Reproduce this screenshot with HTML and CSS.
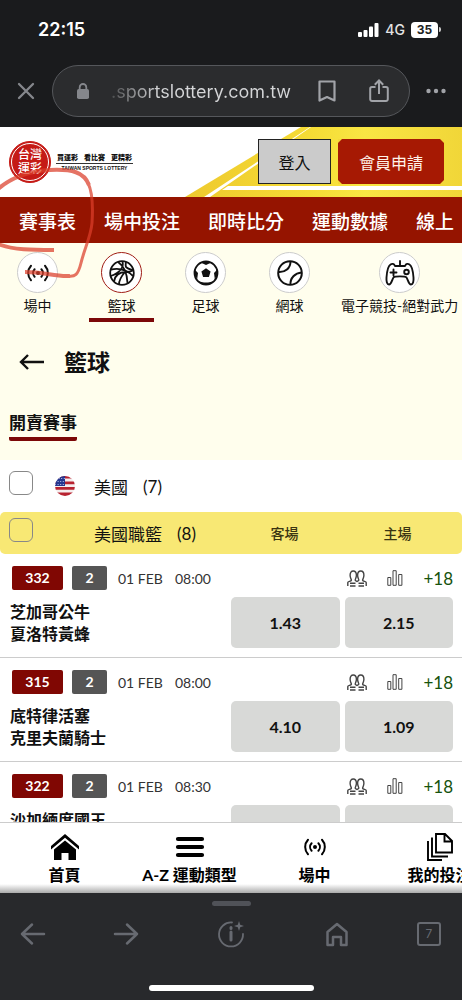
FILE: index.html
```html
<!DOCTYPE html>
<html lang="zh-Hant">
<head>
<meta charset="utf-8">
<meta name="viewport" content="width=device-width, initial-scale=1">
<title>台灣運彩</title>
<link rel="stylesheet" href="styles.css">
</head>
<body>
<svg class="defs" aria-hidden="true">
  <symbol id="live" viewBox="0 0 24 24"><g fill="none" stroke="currentColor" stroke-width="2" stroke-linecap="round"><path d="M8.6 8.2a5.6 5.6 0 0 0 0 7.6M15.4 8.2a5.6 5.6 0 0 1 0 7.6M5 4.8a10.6 10.6 0 0 0 0 14.4M19 4.8a10.6 10.6 0 0 1 0 14.4"/></g><circle cx="12" cy="12" r="2" fill="currentColor"/></symbol>
  <symbol id="people" viewBox="0 0 20 17"><g fill="none" stroke="currentColor" stroke-width="1.400"><path d="M.8 16v-3.400c0-1.400 3.200-1 3.600-2.300.2-.8-1.300-2-1.300-5C3.100 2.600 4.300 1 6.200 1s3.200 1.600 3.200 4.300c0 3-1.600 4.200-1.200 5 .3.700 1 .9 1.800 1.200.8-.3 1.500-.5 1.800-1.200.4-.8-1.200-2-1.200-5C10.600 2.600 11.900 1 13.800 1s3.100 1.600 3.100 4.300c0 3-1.500 4.200-1.300 5 .4 1.300 3.600.9 3.600 2.300V16M3 13.300h5.500M3 16h5.500M11.500 13.300H17M11.500 16H17"/></g></symbol>
  <symbol id="chart" viewBox="0 0 16 16"><path d="M.8 7.500h3v7.800h-3zM6 .7h3.200v14.600H6zM11.700 4.500h3.200v10.800h-3.200z" fill="none" stroke="currentColor"/></symbol>
</svg>

<div class="phone">
  <header class="chrome">
    <div class="status">
      <time class="clock">22:15</time>
      <div class="signals">
        <svg width="21" height="14" viewBox="0 0 21 14"><g fill="#fff"><rect x="0" y="9" width="4" height="5" rx="1"/><rect x="5.500" y="7" width="4" height="7" rx="1"/><rect x="11" y="3.500" width="4" height="10.500" rx="1"/><rect x="16.500" y="0" width="4" height="14" rx="1"/></g></svg>
        <span class="network">4G</span>
        <span class="battery">35</span>
      </div>
    </div>
    <div class="address-row">
      <button class="icon-btn close" aria-label="關閉"><svg width="18" height="18" viewBox="0 0 18 18"><path d="M2 2l14 14M16 2L2 16" stroke="currentColor" stroke-width="2.300" stroke-linecap="round"/></svg></button>
      <div class="address">
        <svg class="lock" width="12" height="16" viewBox="0 0 12 16"><path d="M2.700 7V4.300a3.300 3.300 0 0 1 6.600 0V7" fill="none" stroke="currentColor" stroke-width="1.800"/><rect y="6" width="12" height="10" rx="1.800" fill="currentColor"/></svg>
        <span class="url">.sportslottery.com.tw</span>
        <button class="icon-btn mark" aria-label="書籤"><svg width="18" height="23" viewBox="0 0 18 23"><path d="M1.500 1.500h15v19L9 17l-7.500 3.500z" fill="none" stroke="currentColor" stroke-width="2.200" stroke-linejoin="round"/></svg></button>
        <button class="icon-btn" aria-label="分享"><svg width="20" height="24" viewBox="0 0 20 24"><path d="M6.500 8H3a1.800 1.800 0 0 0-1.800 1.800v10.400A1.800 1.800 0 0 0 3 22h14a1.800 1.800 0 0 0 1.800-1.800V9.800A1.800 1.800 0 0 0 17 8h-3.500M10 15V2M5.800 5.700L10 1.500l4.200 4.200" fill="none" stroke="currentColor" stroke-width="2"/></svg></button>
      </div>
      <button class="icon-btn more" aria-label="更多"><svg width="20" height="6" viewBox="0 0 20 6"><g fill="currentColor"><circle cx="2.500" cy="3" r="2.200"/><circle cx="10" cy="3" r="2.200"/><circle cx="17.500" cy="3" r="2.200"/></g></svg></button>
    </div>
  </header>

  <main class="page">
    <div class="masthead">
      <svg class="stripes" viewBox="0 0 462 70" preserveAspectRatio="xMaxYMin slice" aria-hidden="true">
        <defs><linearGradient id="gold"><stop offset="0" stop-color="#eec92e"/><stop offset=".45" stop-color="#f5dc35"/><stop offset=".65" stop-color="#f9e644"/><stop offset="1" stop-color="#f1d638"/></linearGradient></defs>
        <path d="M185 70L301 0h161v70z" fill="url(#gold)"/>
        <path d="M204 70L310 0h1L210 70zM228 59h234v4H222z" fill="#fff"/>
      </svg>
      <a class="logo" href="#">
        <span class="seal"><span>台灣</span><span>運彩</span></span>
        <span class="slogan"><span class="zh"><span>買運彩</span><span>看比賽</span><span>更精彩</span></span><span class="en">TAIWAN SPORTS LOTTERY</span></span>
      </a>
      <div class="account">
        <button class="login">登入</button>
        <button class="join">會員申請<svg class="corners" viewBox="0 0 106 45" preserveAspectRatio="none" aria-hidden="true"><path d="M0 0h4L0 4zM106 0v4l-4-4zM0 45v-4l4 4zM106 45h-4l4-4z" fill="#f3d63a"/></svg></button>
      </div>
    </div>
    <nav class="main-nav">
      <a href="#">賽事表</a><a href="#">場中投注</a><a href="#">即時比分</a><a href="#">運動數據</a><a href="#">線上</a>
    </nav>

    <section class="intro">
      <nav class="sports">
        <a href="#"><span class="disc"><svg width="24" height="24"><use href="#live"/></svg></span>場中</a>
        <a href="#" class="on"><span class="disc"><svg width="26" height="26" viewBox="0 0 26 26"><g fill="none" stroke="#111" stroke-width="1.800"><circle cx="13" cy="13" r="11.800"/><path d="M2 9.500C9 8 17 9 24 16M9 2c6 4 9 10 9.500 21M13.500 1.200C15 8 10 13 1.800 16M17 2c-1 5-1 6 7 8M5 21.500c1-6 5-9.500 12-9.500 3 0 5-.5 7-1.500M10 24.500c0-5 3-9 6-12.500"/></g></svg></span>籃球</a>
        <a href="#"><span class="disc"><svg width="26" height="26" viewBox="0 0 26 26"><circle cx="13" cy="13" r="11.500" fill="none" stroke="#111" stroke-width="1.800"/><path d="M13 8.300l4.600 3.300-1.700 5.400h-5.800l-1.700-5.400zM7.500 2.500L13 5l5.500-2.500L13 1zM1.200 9L5 13l-.8 6L1 14zM24.800 9L21 13l.8 6 3.200-5zM6 21.500l5 1 4 0 5-1-3.500 3.200h-7z" fill="#111"/></svg></span>足球</a>
        <a href="#"><span class="disc"><svg width="26" height="26" viewBox="0 0 26 26"><g fill="none" stroke="#111" stroke-width="2"><circle cx="13" cy="13" r="11.800"/><path d="M1.500 12C8 12.500 13.500 8.500 13.500 1.200M13.500 24.800C13 18 18 13 24.700 12.500"/></g></svg></span>網球</a>
        <a href="#"><span class="disc"><svg width="30" height="28" viewBox="0 0 30 28"><g fill="none" stroke="#111" stroke-width="1.900" stroke-linejoin="round" stroke-linecap="round"><path d="M15 2v5M5.500 5.500C7 4.500 9 4.500 10 7h10c1-2.500 3-2.500 4.500-1.500 2.500 1.500 3.500 6 4 13 .3 4-.5 7-2.500 7-2.500 0-3-5-4.500-7-1.200-1.500-11.800-1.500-13 0-1.500 2-2 7-4.500 7-2 0-2.800-3-2.500-7 .5-7 1.500-11.500 4-13zM5.500 13.500h6M8.500 10.500v6"/><circle cx="21.500" cy="13" r="2.300"/></g></svg></span>電子競技-絕對武力</a>
      </nav>
      <div class="heading">
        <button class="icon-btn back" aria-label="返回"><svg width="26" height="18" viewBox="0 0 26 18"><path d="M25 9H2M9 2L2 9l7 7" fill="none" stroke="currentColor" stroke-width="2.400"/></svg></button>
        <h1>籃球</h1>
      </div>
      <a class="tab" href="#">開賣賽事</a>
    </section>

    <section class="events">
      <label class="country">
        <input type="checkbox">
        <svg class="flag" width="20" height="20" viewBox="0 0 20 20"><clipPath id="round"><circle cx="10" cy="10" r="10"/></clipPath><g clip-path="url(#round)"><path d="M0 0h20v20H0z" fill="#f5eeee"/><path d="M0 0h20v2.500H0zM0 5.500h20v2.800H0zM0 11h20v2.800H0zM0 16.500h20V20H0z" fill="#b82330"/><path d="M0 0h10v10H0z" fill="#26378f"/><path d="M1 2.500h9M0 5.500h9M0 8.500h9" stroke="#b8c4ee" stroke-dasharray="1 1.600"/></g></svg>
        <span>美國</span><span class="count">(7)</span>
      </label>
      <div class="league">
        <label class="league-name"><input type="checkbox"><span>美國職籃</span><span class="count">(8)</span></label>
        <span class="side">客場</span><span class="side">主場</span>
      </div>

      <article class="match">
        <div class="info">
          <div class="meta"><span class="code">332</span><span class="min">2</span><span class="date">01 FEB</span><time>08:00</time></div>
          <div class="teams">芝加哥公牛<br>夏洛特黃蜂</div>
        </div>
        <div class="bets">
          <div class="extras"><svg width="20" height="17"><use href="#people"/></svg><svg width="16" height="16"><use href="#chart"/></svg><a href="#">+18</a></div>
          <div class="odds"><button>1.43</button><button>2.15</button></div>
        </div>
      </article>
      <article class="match">
        <div class="info">
          <div class="meta"><span class="code">315</span><span class="min">2</span><span class="date">01 FEB</span><time>08:00</time></div>
          <div class="teams">底特律活塞<br>克里夫蘭騎士</div>
        </div>
        <div class="bets">
          <div class="extras"><svg width="20" height="17"><use href="#people"/></svg><svg width="16" height="16"><use href="#chart"/></svg><a href="#">+18</a></div>
          <div class="odds"><button>4.10</button><button>1.09</button></div>
        </div>
      </article>
      <article class="match">
        <div class="info">
          <div class="meta"><span class="code">322</span><span class="min">2</span><span class="date">01 FEB</span><time>08:30</time></div>
          <div class="teams">沙加緬度國王</div>
        </div>
        <div class="bets">
          <div class="extras"><svg width="20" height="17"><use href="#people"/></svg><svg width="16" height="16"><use href="#chart"/></svg><a href="#">+18</a></div>
          <div class="odds"><button aria-label="客場"></button><button aria-label="主場"></button></div>
        </div>
      </article>
    </section>

    <svg class="marker" width="100" height="155" viewBox="0 0 100 155" aria-hidden="true"><g fill="none" stroke="#dc3e2a" stroke-linecap="butt" stroke-linejoin="round"><path d="M-2 62C12 50 30 44 50 43c22-1 34 2 39 15" stroke-width="4"/><path d="M88 56c5 10 5 25 4 40-1 13-8 27-11 40-3 12-6 14-13 13" stroke-width="3"/><path d="M70 149c-15 1-25-4-45-4" stroke-width="4"/><path d="M-2 117c15 6 35 6 56 6" stroke-width="4"/></g></svg>
  </main>

  <nav class="bottom-nav">
    <a href="#"><svg width="30" height="28" viewBox="0 0 30 28"><path d="M1 13L15 1l14 12v3.500L15 4.800 1 16.500zM4 16.500L15 7.500l11 9V27h-7.500v-7h-7v7H4z"/></svg>首頁</a>
    <a href="#"><svg width="30" height="28" viewBox="0 0 30 28"><path d="M3 6h24M3 14h24M3 22h24" stroke="#000" stroke-width="4.200" stroke-linecap="round"/></svg>A-Z 運動類型</a>
    <a href="#"><svg width="24" height="28"><use href="#live"/></svg>場中</a>
    <a href="#"><svg width="28" height="28" viewBox="0 0 28 28"><g fill="none" stroke="#000" stroke-width="1.900"><path d="M10 1h9l7 7v11.500H10zM18.500 1v7.500H26M6 4.500v19h16M2 8v19h14"/></g></svg>我的投注</a>
  </nav>

  <footer class="toolbar">
    <span class="grip"></span>
    <div class="tools">
      <button aria-label="上一頁"><svg width="26" height="26" viewBox="0 0 26 26"><path d="M24 13H2M12 3.500L2 13l10 9.500"/></svg></button>
      <button aria-label="下一頁"><svg width="26" height="26" viewBox="0 0 26 26"><path d="M2 13h22M14 3.500L24 13l-10 9.500"/></svg></button>
      <button class="wide" aria-label="資訊"><svg width="28" height="28" viewBox="0 0 28 28"><path class="thin" d="M15 2.500A12 12 0 1 0 26 14"/><path class="thick" d="M14 12v8M14 7.500v1"/><path class="solid" d="M22 1l1.200 3.800L27 6l-3.800 1.200L22 11l-1.200-3.800L17 6l3.800-1.200z"/></svg></button>
      <button aria-label="主頁"><svg width="26" height="26" viewBox="0 0 26 26"><path d="M3.500 24V11L13 3l9.500 8v13H17v-8H9v8z"/></svg></button>
      <button aria-label="分頁" class="tabs"><span>7</span></button>
    </div>
    <span class="home-bar"></span>
  </footer>
</div>
</body>
</html>
```
FILE: styles.css
```css
* { box-sizing: border-box; }
body {
  margin: 0;
  background: #1a1b1d;
  color: #111;
  font-family: Lato, "Noto Sans CJK TC", sans-serif;
}
a { color: inherit; text-decoration: none; }
button { font: inherit; color: inherit; border: 0; padding: 0; background: none; }
svg { display: block; flex-shrink: 0; }
.defs { position: absolute; width: 0; height: 0; }
.phone { display: flex; flex-direction: column; height: 100vh; overflow: hidden; }

.chrome { flex-shrink: 0; padding-bottom: 10px; font-family: Inter, sans-serif; color: #fff; }
.status { display: flex; justify-content: space-between; align-items: center; height: 65px; padding: 0 24px 6px 38px; }
.clock { font-size: 18px; font-weight: 600; }
.signals { display: flex; align-items: center; gap: 6px; }
.network { font-size: 14px; font-weight: 500; color: #e4e4e4; }
.battery { position: relative; width: 27px; border-radius: 4px; background: #fff; color: #222; font-size: 12px; font-weight: 700; line-height: 16px; text-align: center; }
.battery::after { content: ""; position: absolute; right: -3px; top: 5px; width: 2px; height: 5px; border-radius: 0 2px 2px 0; background: #ccc; }
.address-row { display: flex; align-items: center; color: #a1a3a8; }
.icon-btn { display: flex; align-items: center; justify-content: center; }
.close { width: 52px; color: #85878c; }
.more { width: 52px; }
.address { flex: 1; display: flex; align-items: center; height: 52px; padding: 0 20px 0 24px; border: 1px solid #55575b; border-radius: 26px; background: #2b2c2e; }
.lock { color: #85878c; }
.url { flex: 1; padding-left: 22px; font-size: 18px; color: transparent; background: linear-gradient(90deg, #2b2c2e 10px, #d5d6d8 70px); background-clip: text; -webkit-background-clip: text; }
.mark { margin-right: 33px; }

.page { position: relative; flex: 1; min-height: 0; overflow: hidden; background: #fff; }
.masthead { position: relative; display: flex; justify-content: space-between; height: 70px; padding: 12px 18px 0 9px; }
.stripes { position: absolute; inset: 0; width: 100%; height: 100%; }
.logo { position: relative; display: flex; align-items: center; height: 45px; gap: 5px; }
.seal { display: flex; flex-direction: column; align-items: center; justify-content: center; width: 42px; height: 42px; border: 1px solid #c51a16; outline: 1px solid #fff; outline-offset: -3px; border-radius: 50%; background: #c51a16; color: #fff; font-size: 12px; font-weight: 500; line-height: 14px; }
.slogan { display: flex; flex-direction: column; }
.zh { display: flex; justify-content: space-between; gap: 6px; padding: 0 1px; border-bottom: 1px solid #333; font-size: 7px; font-weight: 900; line-height: 12px; }
.en { font: 700 5px/9px "Liberation Sans", sans-serif; text-align: center; }
.account { position: relative; display: flex; gap: 7px; height: 45px; font-size: 16px; }
.login { width: 73px; border: 1px solid #222; background: #cbcbcb; }
.join { position: relative; width: 106px; background: #a61903; color: #fff3e9; }
.corners { position: absolute; inset: 0; width: 100%; height: 100%; }
.main-nav { display: flex; align-items: center; gap: 28px; height: 46px; padding-left: 19px; background: #951400; color: #fff; font-size: 19px; font-weight: 500; white-space: nowrap; }

.intro { padding-bottom: 19px; background: #fffeed; }
.sports { display: flex; gap: 19px; padding: 9px 3px 0 5px; font-size: 14px; line-height: 20px; }
.sports a { display: flex; flex-direction: column; align-items: center; min-width: 65px; padding-bottom: 2px; border-bottom: 4px solid transparent; white-space: nowrap; }
.sports a.on { border-color: #7c0808; }
.disc { display: grid; place-items: center; width: 41px; height: 41px; margin-bottom: 3px; border: 1px solid #ccc; border-radius: 50%; background: #fff; }
.on .disc { border-color: #a01c14; }
.heading { display: flex; align-items: center; gap: 19px; padding: 22px 19px 30px; }
.heading h1 { margin: 0; font-size: 23px; font-weight: 700; line-height: 36px; }
.tab { display: block; width: max-content; margin-left: 9px; padding-bottom: 1px; border-bottom: 4px solid #7c0808; border-radius: 2px; font-size: 17px; font-weight: 700; line-height: 26px; }

.country, .league { display: flex; align-items: center; font-size: 17px; }
.country { height: 52px; padding-left: 9px; }
input[type="checkbox"] { appearance: none; width: 24px; height: 24px; margin: 0 0 6px; border: 1px solid #888; border-radius: 6px; }
.flag { margin: 0 19px 0 22px; }
.count { margin-left: 15px; }
.league { height: 42px; border-radius: 5px; padding-right: 8px; background: #f8e874; }
.league-name { display: flex; align-items: center; flex: 1; padding-left: 9px; }
.league-name input { margin-right: 61px; }
.side { width: 113px; font-size: 14px; font-weight: 500; text-align: center; color: #3b3512; }

.match { display: flex; justify-content: space-between; height: 104px; padding: 12px 9px 0 10px; border-bottom: 1px solid #ccc; }
.meta { display: flex; align-items: center; height: 24px; padding-left: 2px; font-size: 14px; color: #333; }
.code, .min { border-radius: 2px; color: #fff; font-weight: 700; line-height: 24px; text-align: center; }
.code { width: 51px; margin-right: 9px; background: #800703; }
.min { width: 35px; margin-right: 11px; background: #555; }
.date { margin-right: 12px; }
.teams { margin-top: 11px; font-size: 16px; font-weight: 700; line-height: 22px; }
.bets { width: 222px; }
.extras { display: flex; align-items: center; justify-content: flex-end; height: 24px; gap: 20px; color: #444; }
.extras a { font-size: 17px; color: #16530d; }
.odds { display: grid; grid-template-columns: 1fr 1fr; gap: 5px; margin-top: 7px; }
.odds button { height: 51px; border-radius: 5px; background: #d8d9d7; color: #111; font-size: 16px; font-weight: 700; }
.marker { position: absolute; left: 0; top: 0; opacity: .72; pointer-events: none; }

.bottom-nav { display: grid; grid-auto-flow: column; grid-auto-columns: 125px; flex-shrink: 0; height: 71px; padding: 10px 0 0 2px; border-top: 1px solid #ccc; overflow: hidden; background: linear-gradient(#fff 61px, #aaa); color: #000; font-size: 16px; font-weight: 700; line-height: 24px; white-space: nowrap; }
.bottom-nav a { display: flex; flex-direction: column; align-items: center; gap: 2px; }

.toolbar { flex-shrink: 0; display: flex; flex-direction: column; align-items: center; height: 107px; padding: 8px 0 9px; background: #28292c; }
.grip { width: 39px; height: 5px; border-radius: 3px; background: #505258; }
.tools { display: flex; justify-content: space-between; align-self: stretch; padding: 14px 20px 0; }
.tools button { display: grid; place-items: center; width: 26px; height: 28px; color: #676a71; }
.tools .wide { width: 52px; }
.tools path { fill: none; stroke: currentColor; stroke-width: 2.500; stroke-linecap: round; stroke-linejoin: round; }
.tools .thin { stroke-width: 1.800; }
.tools .thick { stroke-width: 3; }
.tools .solid { fill: currentColor; stroke: none; }
.tools .tabs span { width: 24px; height: 24px; border: 2px solid currentColor; border-radius: 3px; font: 12px/20px Inter, sans-serif; text-align: center; }
.home-bar { width: 165px; height: 6px; margin-top: auto; border-radius: 3px; background: #fff; }
```
